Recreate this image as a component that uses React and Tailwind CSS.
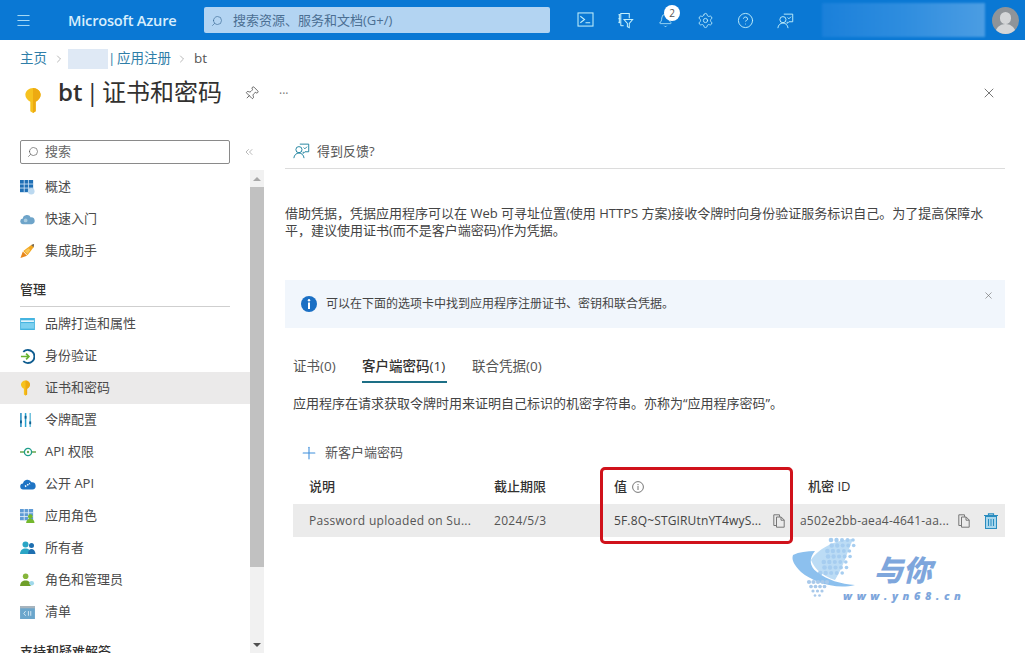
import React from "react";
import { Menu, Search, Bell, Settings, CircleHelp, Pin, X, Plus, ChevronRight, ChevronsLeft } from "lucide-react";

const FONT = "font-['Open_Sans','Noto_Sans_CJK_SC',sans-serif]";

function Feedback({ className }) {
  return (
    <svg viewBox="0 0 20 20" fill="none" stroke="currentColor" strokeWidth="1.1" className={className}>
      <path d="M8 2.500h10.500v9h-4.500l-2 2v-2" />
      <circle cx="7" cy="9" r="3.600" />
      <path d="M1 19c.4-3.600 2.800-6 6-6s5.600 2.400 6 6" />
      <path d="M12.500 6.500l1.500 1.500 2.500-2.500" />
    </svg>
  );
}

function Terminal() {
  return (
    <svg viewBox="0 0 18 16" fill="none" stroke="currentColor" strokeWidth="1.100" className="w-[17px] h-[15px]">
      <rect x="1" y="1" width="16" height="14" />
      <path d="M3.500 4.500L8 8l-4.500 3.500M9 11.500h5" />
    </svg>
  );
}

function DirFilter() {
  return (
    <svg viewBox="0 0 18 18" fill="none" stroke="currentColor" strokeWidth="1.100" className="w-[17px] h-[17px]">
      <path d="M4 14.500V1.500h9v5" />
      <path d="M1.500 3h2M1.500 7h2M1.500 11h2M2.500 2v10" />
      <path d="M4 14.500h3" />
      <path d="M7.500 8h9l-3.500 4v4.500l-2-1V12z" />
    </svg>
  );
}

function KeyIcon({ className }) {
  return (
    <svg viewBox="0 0 20 30" className={className}>
      <path d="M10 1c4.500 0 8.500 3.500 8.500 7.500 0 3.500-2.500 6-5.500 8V27l-3 2-3-2V16.500C4 14.500 1.500 12 1.500 8.500 1.500 4.500 5.500 1 10 1z" fill="#f6c21f" />
      <path d="M10 1c4.500 0 8.500 3.500 8.500 7.500 0 3.500-2.500 6-5.500 8V27l-3 2z" fill="#edaa12" />
    </svg>
  );
}

function CopyIcon() {
  return (
    <svg viewBox="0 0 12 14" fill="none" stroke="#777" strokeWidth="1" className="w-[12px] h-[14px]">
      <path d="M3.500 11.500H.8V.8h5.700v2" />
      <path d="M3.500 3h4.700l3 3v7.200H3.500z" />
      <path d="M8 3v3.200h3.200" />
    </svg>
  );
}

function TrashIcon() {
  return (
    <svg viewBox="0 0 14 16" className="w-[14px] h-[16px]">
      <rect x="1.500" y="3.500" width="11" height="12" fill="#a8d6ec" stroke="#2a8dc0" />
      <path d="M0 2.500h14M4.500 2.500V.8h5v1.700" stroke="#2a8dc0" strokeWidth="1.200" fill="none" />
      <path d="M4.500 6v7M7 6v7M9.500 6v7" stroke="#2a8dc0" />
    </svg>
  );
}

const navIcon = {
  overview: (
    <svg viewBox="0 0 16 16" className="w-[15px] h-[15px]">
      <rect x="0" y="0" width="14" height="13" fill="#1f6fb5" />
      <path d="M4.500 0v13M9 0v13M0 4.300h14M0 8.600h14" stroke="#cfe3f5" strokeWidth="0.900" />
      <circle cx="12" cy="12" r="3.500" fill="#bcd9f0" />
    </svg>
  ),
  quick: (
    <svg viewBox="0 0 16 12" className="w-[15px] h-[12px]">
      <path d="M3.500 11.500a3 3 0 0 1-.5-6 4.500 4.500 0 0 1 8.500-1.200 3.600 3.600 0 0 1 1 7.200z" fill="#6ea4c9" />
      <circle cx="6" cy="7.500" r="2" fill="#a8cbe0" />
    </svg>
  ),
  rocket: (
    <svg viewBox="0 0 16 16" className="w-[15px] h-[16px]">
      <path d="M3.500 8L12 1.500l3-1-.5 3.500L8 12.500z" fill="#f2a61f" />
      <path d="M12 1.500l3-1-.5 3.500z" fill="#666" />
      <path d="M0.500 15.500l2.500-7 4.500 4.500z" fill="#e8861a" />
      <path d="M5 8l4-3 2 2-3 4z" fill="#f8c65a" />
    </svg>
  ),
  brand: (
    <svg viewBox="0 0 16 13" className="w-[15px] h-[12px]">
      <rect width="16" height="13" fill="#45b4e0" />
      <rect x="1" y="2.500" width="14" height="1.800" fill="#e8f6fc" />
      <rect x="1" y="5.500" width="14" height="6" fill="#7dd0ef" />
    </svg>
  ),
  auth: (
    <svg viewBox="0 0 16 16" fill="none" className="w-[15px] h-[15px]">
      <path d="M3.500 3a7 7 0 1 1 0 10" stroke="#0e5c8f" strokeWidth="2" />
      <path d="M1 8h8M6.500 5l3 3-3 3" stroke="#67b22f" strokeWidth="1.800" />
    </svg>
  ),
  token: (
    <svg viewBox="0 0 14 16" className="w-[13px] h-[15px]">
      <path d="M1 0v15" stroke="#1f8ac0" strokeWidth="1.600" />
      <path d="M6 0v15" stroke="#23a0d0" strokeWidth="1.600" />
      <path d="M11 0v15" stroke="#6cc0dc" strokeWidth="1.600" />
      <rect x="0" y="8" width="2" height="3" fill="#0f5f90" />
      <rect x="5" y="3" width="2" height="3" fill="#0f5f90" />
      <rect x="10" y="9" width="2" height="3" fill="#0f5f90" />
    </svg>
  ),
  api: (
    <svg viewBox="0 0 16 12" fill="none" className="w-[16px] h-[12px]">
      <path d="M0 6h5M11 6h5" stroke="#6aa84f" strokeWidth="1.300" />
      <circle cx="8" cy="6" r="3.600" stroke="#1f9e8a" strokeWidth="1.300" />
      <circle cx="8" cy="6" r="1.200" fill="#6aa84f" />
    </svg>
  ),
  expose: (
    <svg viewBox="0 0 16 12" className="w-[16px] h-[12px]">
      <path d="M3.500 11.500a3 3 0 0 1-.5-6 4.500 4.500 0 0 1 8.500-1.200 3.600 3.600 0 0 1 1 7.200z" fill="#1f74c4" />
      <path d="M5 8.500l5-3" stroke="#ffffff" strokeWidth="1.500" strokeDasharray="1.500 1" />
    </svg>
  ),
  roles: (
    <svg viewBox="0 0 16 16" className="w-[15px] h-[15px]">
      <rect x="0" y="0" width="14" height="12" fill="#5f9bd5" />
      <path d="M4.500 0v12M9 0v12M0 4h14M0 8h14" stroke="#e2eef9" strokeWidth="0.900" />
      <circle cx="11" cy="8" r="2.500" fill="#74b82e" />
      <path d="M6.500 15c.3-3.300 2-4.500 4.500-4.500s4.200 1.200 4.500 4.500z" fill="#74b82e" />
    </svg>
  ),
  owners: (
    <svg viewBox="0 0 16 14" className="w-[16px] h-[14px]">
      <circle cx="5.500" cy="3.500" r="3" fill="#2aa5c5" />
      <path d="M0 13c.3-4 2.500-5.500 5.500-5.500S10.700 9 11 13z" fill="#2aa5c5" />
      <circle cx="11.500" cy="4.500" r="2.500" fill="#1e6fb0" />
      <path d="M8 13c.3-3.500 1.500-5 3.500-5s3.700 1.500 4 5z" fill="#1e6fb0" />
    </svg>
  ),
  admins: (
    <svg viewBox="0 0 16 15" className="w-[15px] h-[14px]">
      <circle cx="6" cy="3.500" r="3" fill="#86b53a" />
      <path d="M0 14c.3-4.500 2.800-6 6-6s5.200 1.500 5.500 6z" fill="#6f9f2a" />
      <circle cx="12.500" cy="11" r="2.500" fill="#9fd8ea" />
    </svg>
  ),
  manifest: (
    <svg viewBox="0 0 16 14" className="w-[15px] h-[13px]">
      <rect width="16" height="14" fill="#6ba6cc" />
      <rect width="16" height="2.500" fill="#a8b4bd" />
      <path d="M6 5.500L4 8l2 2.500M9 5.500v5M11.500 5.500v5" stroke="#e6f2f9" strokeWidth="0.900" fill="none" />
    </svg>
  ),
};

function NavItem({ icon, label, active }) {
  return (
    <div className={`h-8 flex items-center pl-5 text-[13px] text-[#4a4a4a] ${active ? "bg-[#ebeaea]" : ""}`}>
      <span className="w-[25px] flex items-center">{icon}</span>
      <span>{label}</span>
    </div>
  );
}

function Sidebar() {
  return (
    <aside className="w-[264px] shrink-0 flex flex-col h-[513px] mt-[-1px]">
      <div className="h-[24px] flex items-center shrink-0">
        <div className="ml-5 w-[210px] h-[24px] border border-[#8a8a8a] rounded-[2px] flex items-center pl-[6px] text-[13px] text-[#666]">
          <Search className="w-[12px] h-[12px] mr-[6px] scale-x-[-1] text-[#555]" strokeWidth={1.3} />
          搜索
        </div>
        <ChevronsLeft className="w-[12px] h-[12px] ml-[13px] text-[#8a8a8a]" strokeWidth={1.2} />
      </div>
      <div className="flex flex-1 min-h-0 mt-[6px]">
        <div className="w-[250px] overflow-hidden pt-[1px]">
          <NavItem icon={navIcon.overview} label="概述" />
          <NavItem icon={navIcon.quick} label="快速入门" />
          <NavItem icon={navIcon.rocket} label="集成助手" />
          <div className="mx-5 mt-[13px] h-[27px] border-b border-[#cfcfcf] text-[13px] font-medium text-[#323130] leading-[18px]">管理</div>
          <div className="h-[1px]" />
          <NavItem icon={navIcon.brand} label="品牌打造和属性" />
          <NavItem icon={navIcon.auth} label="身份验证" />
          <NavItem icon={<KeyIcon className="w-[11px] h-[16px]" />} label="证书和密码" active />
          <NavItem icon={navIcon.token} label="令牌配置" />
          <NavItem icon={navIcon.api} label="API 权限" />
          <NavItem icon={navIcon.expose} label="公开 API" />
          <NavItem icon={navIcon.roles} label="应用角色" />
          <NavItem icon={navIcon.owners} label="所有者" />
          <NavItem icon={navIcon.admins} label="角色和管理员" />
          <NavItem icon={navIcon.manifest} label="清单" />
          <div className="ml-5 mt-[14px] text-[13px] font-medium text-[#323130] leading-[18px]">支持和疑难解答</div>
        </div>
        <div className="w-[14px] bg-[#f1f1f1] flex flex-col items-center">
          <div className="h-[17px] flex items-center justify-center">
            <div className="w-0 h-0 border-x-[4px] border-x-transparent border-b-[4px] border-b-[#a8a8a8]" />
          </div>
          <div className="w-full h-[380px] bg-[#c1c1c1]" />
          <div className="flex-1" />
          <div className="h-[17px] flex items-center justify-center">
            <div className="w-0 h-0 border-x-[4px] border-x-transparent border-t-[4px] border-t-[#505050]" />
          </div>
        </div>
      </div>
    </aside>
  );
}

function Main() {
  return (
    <main className="flex-1 pl-[21px] pr-[20px] text-[13px] text-[#444]">
      <div className="h-[28px] border-b border-[#dcdcdc] flex items-start pl-[8px] pt-[1px]">
        <Feedback className="w-[17px] h-[17px] text-[#1a7f9c]" />
        <span className="ml-[7px] text-[#555] leading-[18px]">得到反馈?</span>
      </div>
      <p className="mt-[36px] leading-[17px] text-[#444] w-[720px]">
        借助凭据，凭据应用程序可以在 Web 可寻址位置(使用 HTTPS 方案)接收令牌时向身份验证服务标识自己。为了提高保障水平，建议使用证书(而不是客户端密码)作为凭据。
      </p>
      <div className="mt-[41px] h-[48px] bg-[#f1f6fc] flex items-center relative pl-[16px] text-[12px] text-[#444]">
        <svg viewBox="0 0 16 16" className="w-[16px] h-[16px]">
          <circle cx="8" cy="8" r="8" fill="#1a6fc4" />
          <circle cx="8" cy="4.300" r="1.200" fill="#fff" />
          <rect x="7" y="6.500" width="2" height="6.500" fill="#fff" />
        </svg>
        <span className="ml-[9px]">可以在下面的选项卡中找到应用程序注册证书、密钥和联合凭据。</span>
        <X className="absolute right-[11px] top-[10px] w-[11px] h-[11px] text-[#666]" strokeWidth={1.3} />
      </div>
      <div className="mt-[29px] flex pl-[8px] text-[13.500px] h-[26px] leading-[18px]">
        <div className="w-[69px] text-[#555]">证书(0)</div>
        <div className="w-[85px] font-medium text-[#323130] border-b-2 border-[#1d6f86] h-[26px] whitespace-nowrap">客户端密码(1)</div>
        <div className="ml-[25px] text-[#555]">联合凭据(0)</div>
      </div>
      <p className="mt-[11px] pl-[8px] leading-[18px] text-[13px]">应用程序在请求获取令牌时用来证明自己标识的机密字符串。亦称为“应用程序密码”。</p>
      <div className="mt-[31px] pl-[14px] flex items-center h-[20px]">
        <Plus className="w-[20px] h-[20px] text-[#3f8fdc]" strokeWidth={1.3} />
        <span className="ml-[6px] text-[#555]">新客户端密码</span>
      </div>
      <div className="mt-[14px] ml-[8px] grid grid-cols-[201px_120px_186px_205px] h-[19px] items-center font-medium text-[#323130] text-[13px]">
        <div className="pl-[16px]">说明</div>
        <div>截止期限</div>
        <div className="flex items-center">值
          <svg viewBox="0 0 12 12" fill="none" stroke="#777" className="ml-[5px] w-[12px] h-[12px]">
            <circle cx="6" cy="6" r="5.400" />
            <path d="M6 5v4M6 3v1.200" />
          </svg>
        </div>
        <div className="pl-[8px]">机密 ID</div>
      </div>
      <div className="mt-[8px] ml-[8px] h-[33px] bg-[#ebebeb] grid grid-cols-[201px_120px_186px_205px] items-center text-[12px] text-[#555]">
        <div className="pl-[16px] tracking-[0.3px]">Password uploaded on Su...</div>
        <div className="tracking-[0.3px]">2024/5/3</div>
        <div className="flex items-center text-[#444]">
          <span className="w-[159px] tracking-[0.15px] whitespace-nowrap">5F.8Q~STGIRUtnYT4wyS...</span>
          <CopyIcon />
        </div>
        <div className="flex items-center">
          <span className="w-[158px] tracking-[0.2px] whitespace-nowrap">a502e2bb-aea4-4641-aa...</span>
          <CopyIcon />
          <span className="ml-[14px]"><TrashIcon /></span>
        </div>
      </div>
    </main>
  );
}

function Watermark() {
  const upper = [];
  for (let r = 0; r < 7; r++) {
    for (let c = 0; c < 5; c++) {
      upper.push([46 + c * 5.500 + (r % 2) * 2.500 - r * 1.800, 10 + r * 5.500, 2.300 - c * 0.120]);
    }
  }
  const lower = [];
  for (let r = 0; r < 4; r++) {
    for (let c = 0; c < 5 - r; c++) {
      lower.push([24 + c * 4.500 + r * 2, 52 + r * 4.500, 2.100 - r * 0.250]);
    }
  }
  return (
    <div className="absolute left-[785px] top-[530px] w-[190px] h-[80px]">
      <svg viewBox="0 0 190 80" className="absolute inset-0 w-[190px] h-[80px]">
        <path d="M68 9C48 10 32 20 26 30c4 10 12 16 24 20 6-10 10-20 12-26z" fill="#bcdcf5" />
        <g fill="#a6cdf0">
          {upper.map(([x, y, r], i) => <circle key={i} cx={x} cy={y} r={r} />)}
        </g>
        <path d="M8 25c6-3 14-4 22-4-6 7-6 15 2 21 10 8 24 12 38 13-20 5-42-3-54-13C10 36 6 30 8 25z" fill="#8cc0ee" />
        <g fill="#a9c9ea">
          {lower.map(([x, y, r], i) => <circle key={i} cx={x} cy={y} r={r} />)}
        </g>
      </svg>
      <div className="absolute left-[89px] top-[22px] text-[29px] leading-[36px] font-extrabold italic text-[#7ea6dc]">与你</div>
      <div className="absolute left-[58px] top-[59px] text-[11px] leading-[14px] font-extrabold italic text-[#7ea6dc] tracking-[4.600px] whitespace-nowrap">www.yn68.cn</div>
    </div>
  );
}

export default function App() {
  return (
    <div className={`relative w-[1025px] h-[653px] overflow-hidden bg-white flex flex-col ${FONT}`}>
      <header className="h-10 shrink-0 bg-[#0a78d4] flex items-center text-white">
        <Menu className="ml-[15px] w-[17px] h-[17px] text-[#b8e4f8]" strokeWidth={1.3} />
        <div className="ml-[36px] w-[136px] pt-[1px] text-[14.600px] font-semibold text-[#d8eefc] tracking-[-0.2px] whitespace-nowrap">Microsoft Azure</div>
        <div className="w-[346px] h-[26px] pt-[1px] rounded-[2px] bg-[#b3d4f2] flex items-center pl-[7px] text-[13px] text-[#4b6f93]">
          <Search className="w-[12px] h-[12px] scale-x-[-1] text-[#3a6a96] mr-[10px]" strokeWidth={1.3} />
          搜索资源、服务和文档(G+/)
        </div>
        <div className="ml-[15px] flex text-[#c4f0fb]">
          <div className="w-10 flex justify-center"><Terminal /></div>
          <div className="w-10 flex justify-center"><DirFilter /></div>
          <div className="w-10 flex justify-center relative">
            <Bell className="w-[15px] h-[15px] mt-[1px]" strokeWidth={1.2} />
            <span className="absolute left-[19px] top-[-7px] w-4 h-4 rounded-full bg-white text-[#555] text-[10px] leading-4 text-center">2</span>
          </div>
          <div className="w-10 flex justify-center"><Settings className="w-[17px] h-[17px]" strokeWidth={1.2} /></div>
          <div className="w-10 flex justify-center"><CircleHelp className="w-[17px] h-[17px]" strokeWidth={1.3} /></div>
          <div className="w-10 flex justify-center"><Feedback className="w-[17px] h-[17px]" /></div>
        </div>
        <div className="ml-[17px] w-[163px] h-[34px] bg-gradient-to-r from-[#1a80da] via-[#2e8ddf] to-[#4b9de3] blur-[1px]" />
        <div className="ml-[7px] w-[27px] h-[27px] rounded-full bg-[#8f9499] overflow-hidden relative">
          <div className="absolute left-[8px] top-[5px] w-[11px] h-[12px] rounded-full bg-[#d4d6d8]" />
          <div className="absolute left-[3px] top-[17px] w-[21px] h-[12px] rounded-t-[10px] bg-[#d4d6d8]" />
        </div>
      </header>

      <div className="h-[37px] shrink-0 flex items-center pl-5 text-[13.500px] text-[#2f7ea8]">
        <span>主页</span>
        <ChevronRight className="w-[12px] h-[12px] ml-[6px] mr-[3px] text-[#888]" strokeWidth={1.2} />
        <span className="w-[40px] h-[20px] bg-[#dfe9f5] blur-[0.5px]" />
        <span className="[word-spacing:-2px]">| 应用注册</span>
        <ChevronRight className="w-[12px] h-[12px] ml-[5px] mr-[6px] text-[#888]" strokeWidth={1.2} />
        <span className="text-[#555]">bt</span>
      </div>

      <div className="h-[33px] shrink-0 flex items-center relative">
        <KeyIcon className="ml-[24px] mt-[14px] w-[18px] h-[27px]" />
        <h1 className="ml-[16px] mb-[3px] text-[24px] leading-[32px] text-[#323130] w-[162px] whitespace-nowrap [word-spacing:-3px]"><span className="font-semibold">bt</span> | 证书和密码</h1>
        <Pin className="ml-[24px] w-[15px] h-[15px] text-[#444] rotate-45" strokeWidth={1.2} />
        <span className="ml-[20px] text-[#777] text-[12px] leading-[12px]">···</span>
        <X className="absolute left-[981px] top-[8px] w-[16px] h-[16px] text-[#444]" strokeWidth={1.1} />
      </div>

      <div className="flex flex-1 min-h-0 pt-[31px]">
        <Sidebar />
        <Main />
      </div>

      <div className="absolute left-[600px] top-[467px] w-[193px] h-[77px] border-[3px] border-[#d0121b] rounded-[5px]" />
      <Watermark />
    </div>
  );
}
